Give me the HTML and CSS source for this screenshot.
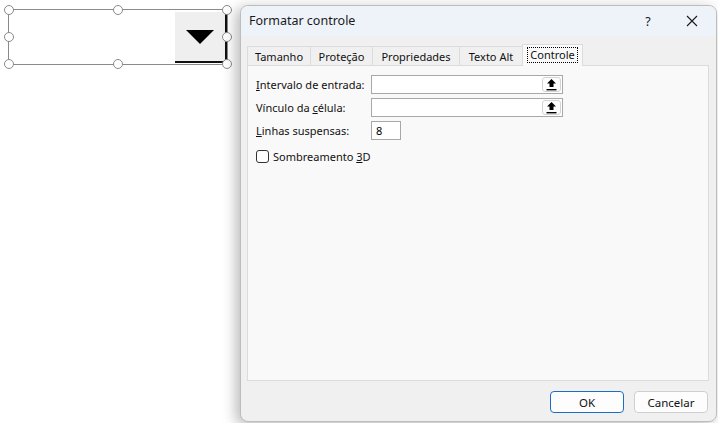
FILE: index.html
```html
<!DOCTYPE html>
<html lang="pt">
<head>
<meta charset="utf-8">
<link rel="stylesheet" href="styles.css">
</head>
<body>
<div class="combo">
  <div class="combo-field"></div>
  <div class="combo-btn">
    <svg width="28" height="14" viewBox="0 0 28 14"><polygon points="0,0 28,0 14,14" fill="#000"/></svg>
  </div>
  <span class="h h-tl"></span><span class="h h-tm"></span><span class="h h-tr"></span>
  <span class="h h-ml"></span><span class="h h-mr"></span>
  <span class="h h-bl"></span><span class="h h-bm"></span><span class="h h-br"></span>
</div>

<div class="dialog">
  <div class="titlebar">
    <span class="title">Formatar controle</span>
    <span class="tb-help">?</span>
    <span class="tb-close">
      <svg width="12" height="12" viewBox="0 0 12 12"><path d="M1 1L11 11M11 1L1 11" stroke="#1a1a1a" stroke-width="1.1" fill="none"/></svg>
    </span>
  </div>
  <div class="body">
    <div class="tabs">
      <div class="tab t1">Tamanho</div>
      <div class="tab t2">Proteção</div>
      <div class="tab t3">Propriedades</div>
      <div class="tab t4">Texto Alt</div>
      <div class="tab active"><span class="focus">Controle</span></div>
    </div>
    <div class="panel">
      <div class="row">
        <label class="lbl"><u>I</u>ntervalo de entrada:</label>
        <div class="ref-input"><span class="ref-btn"><svg width="11" height="13" viewBox="0 0 11 13"><path d="M5.5 1L1 5.5H3.5V9H7.5V5.5H10Z" fill="#000"/><rect x="0.5" y="11" width="10" height="1.4" fill="#000"/></svg></span></div>
      </div>
      <div class="row">
        <label class="lbl">Vínculo da <u>c</u>élula:</label>
        <div class="ref-input"><span class="ref-btn"><svg width="11" height="13" viewBox="0 0 11 13"><path d="M5.5 1L1 5.5H3.5V9H7.5V5.5H10Z" fill="#000"/><rect x="0.5" y="11" width="10" height="1.4" fill="#000"/></svg></span></div>
      </div>
      <div class="row">
        <label class="lbl"><u>L</u>inhas suspensas:</label>
        <div class="num-input">8</div>
      </div>
      <div class="check-row">
        <span class="checkbox"></span>
        <span>Sombreamento <u>3</u>D</span>
      </div>
    </div>
    <div class="buttons">
      <div class="btn primary">OK</div>
      <div class="btn">Cancelar</div>
    </div>
  </div>
</div>
</body>
</html>
```
FILE: styles.css
```css
html, body {
  margin: 0;
  padding: 0;
  width: 718px;
  height: 423px;
  background: #fff;
  overflow: hidden;
  font-family: "Noto Sans", "Open Sans", sans-serif;
  color: #000;
}

/* combo box on sheet */
.combo {
  position: absolute;
  left: 8px;
  top: 9px;
  width: 220px;
  height: 56px;
  border: 1px solid #8a8a8a;
  box-sizing: border-box;
}
.combo-field { position: absolute; inset: 0; }
.combo-btn {
  position: absolute;
  right: 0;
  top: 2px;
  width: 52px;
  bottom: 1px;
  background: #efefef;
  border-right: 2px solid #111;
  border-bottom: 2px solid #111;
  box-sizing: border-box;
  display: flex;
  align-items: center;
  justify-content: center;
}
.combo-btn svg { margin-top: 1px; }
.h {
  position: absolute;
  width: 10px;
  height: 10px;
  border: 1.4px solid #8a8a8a;
  border-radius: 50%;
  background: #fff;
  box-sizing: border-box;
  transform: translate(-50%, -50%);
}
.h-tl { left: 0; top: 0; }
.h-tm { left: 50%; top: 0; }
.h-tr { left: 100%; top: 0; }
.h-ml { left: 0; top: 50%; }
.h-mr { left: 100%; top: 50%; }
.h-bl { left: 0; top: 100%; }
.h-bm { left: 50%; top: 100%; }
.h-br { left: 100%; top: 100%; }

/* dialog */
.dialog {
  position: absolute;
  left: 240px;
  top: 5px;
  width: 477px;
  height: 417px;
  background: #f0f0f0;
  border: 1px solid #bdbdbd;
  border-radius: 8px;
  box-sizing: border-box;
  box-shadow: -4px 3px 14px rgba(0,0,0,0.28);
  overflow: hidden;
  display: flex;
  flex-direction: column;
}
.titlebar {
  height: 30px;
  background: #eef3fa;
  display: flex;
  align-items: center;
  padding-left: 8px;
  font-size: 12.5px;
  flex-shrink: 0;
}
.title { flex: 1; color: #1a1a1a; padding-bottom: 1px; }
.tb-help {
  width: 16px;
  text-align: center;
  font-size: 12.5px;
  margin-right: 30px;
  color: #1a1a1a;
}
.tb-close {
  width: 12px;
  display: flex;
  margin-right: 18px;
}
.body {
  flex: 1;
  display: flex;
  flex-direction: column;
  padding: 8px 7px 0 6px;
}
.tabs {
  display: flex;
  align-items: flex-end;
  height: 21px;
  font-size: 11px;
  position: relative;
  z-index: 1;
}
.tab {
  height: 19px;
  box-sizing: border-box;
  border: 1px solid #dcdcdc;
  border-bottom: none;
  border-right: none;
  background: #f0f0f0;
  display: flex;
  align-items: center;
  justify-content: center;
  color: #111;
}
.t1 { width: 63px; }
.t2 { width: 62px; }
.t3 { width: 87px; }
.t4 { width: 63px; }
.tab.active {
  width: 61px;
  height: 22px;
  margin-bottom: -1px;
  background: #f9f9f9;
  border-right: 1px solid #dcdcdc;
  padding-bottom: 2px;
}
.focus {
  border: 1px dotted #000;
  padding: 0 2px;
  line-height: 14px;
}
.panel {
  height: 316px;
  background: #f9f9f9;
  border: 1px solid #dcdcdc;
  box-sizing: border-box;
  padding: 9px 8px 0 8px;
  display: flex;
  flex-direction: column;
  gap: 4px;
  font-size: 11px;
}
.row {
  display: flex;
  align-items: center;
  height: 19px;
}
.lbl { width: 115px; color: #111; }
.ref-input {
  width: 192px;
  height: 19px;
  box-sizing: border-box;
  border: 1px solid #a8a8a8;
  background: #fff;
  display: flex;
  justify-content: flex-end;
  align-items: center;
  padding-right: 1px;
}
.ref-btn {
  width: 19px;
  height: 15px;
  border: 1px solid #d4d4d4;
  border-radius: 3px;
  box-sizing: border-box;
  display: flex;
  align-items: center;
  justify-content: center;
  background: #fdfdfd;
}
.num-input {
  width: 30px;
  height: 19px;
  box-sizing: border-box;
  border: 1px solid #a8a8a8;
  background: #fff;
  padding-left: 4px;
  line-height: 17px;
}
.check-row {
  display: flex;
  align-items: center;
  gap: 4px;
  margin-top: 5px;
  color: #111;
}
.checkbox {
  width: 13px;
  height: 13px;
  box-sizing: border-box;
  border: 1px solid #333;
  border-radius: 3px;
  background: #fff;
}
.buttons {
  display: flex;
  justify-content: flex-end;
  gap: 10px;
  padding-top: 10px;
  padding-right: 1px;
}
.btn {
  width: 74px;
  height: 22px;
  box-sizing: border-box;
  border: 1px solid #cfcfcf;
  border-radius: 4px;
  background: #fdfdfd;
  font-size: 11.5px;
  display: flex;
  align-items: center;
  justify-content: center;
  color: #111;
}
.btn.primary {
  border: 1px solid #1a6fc4;
}
```
